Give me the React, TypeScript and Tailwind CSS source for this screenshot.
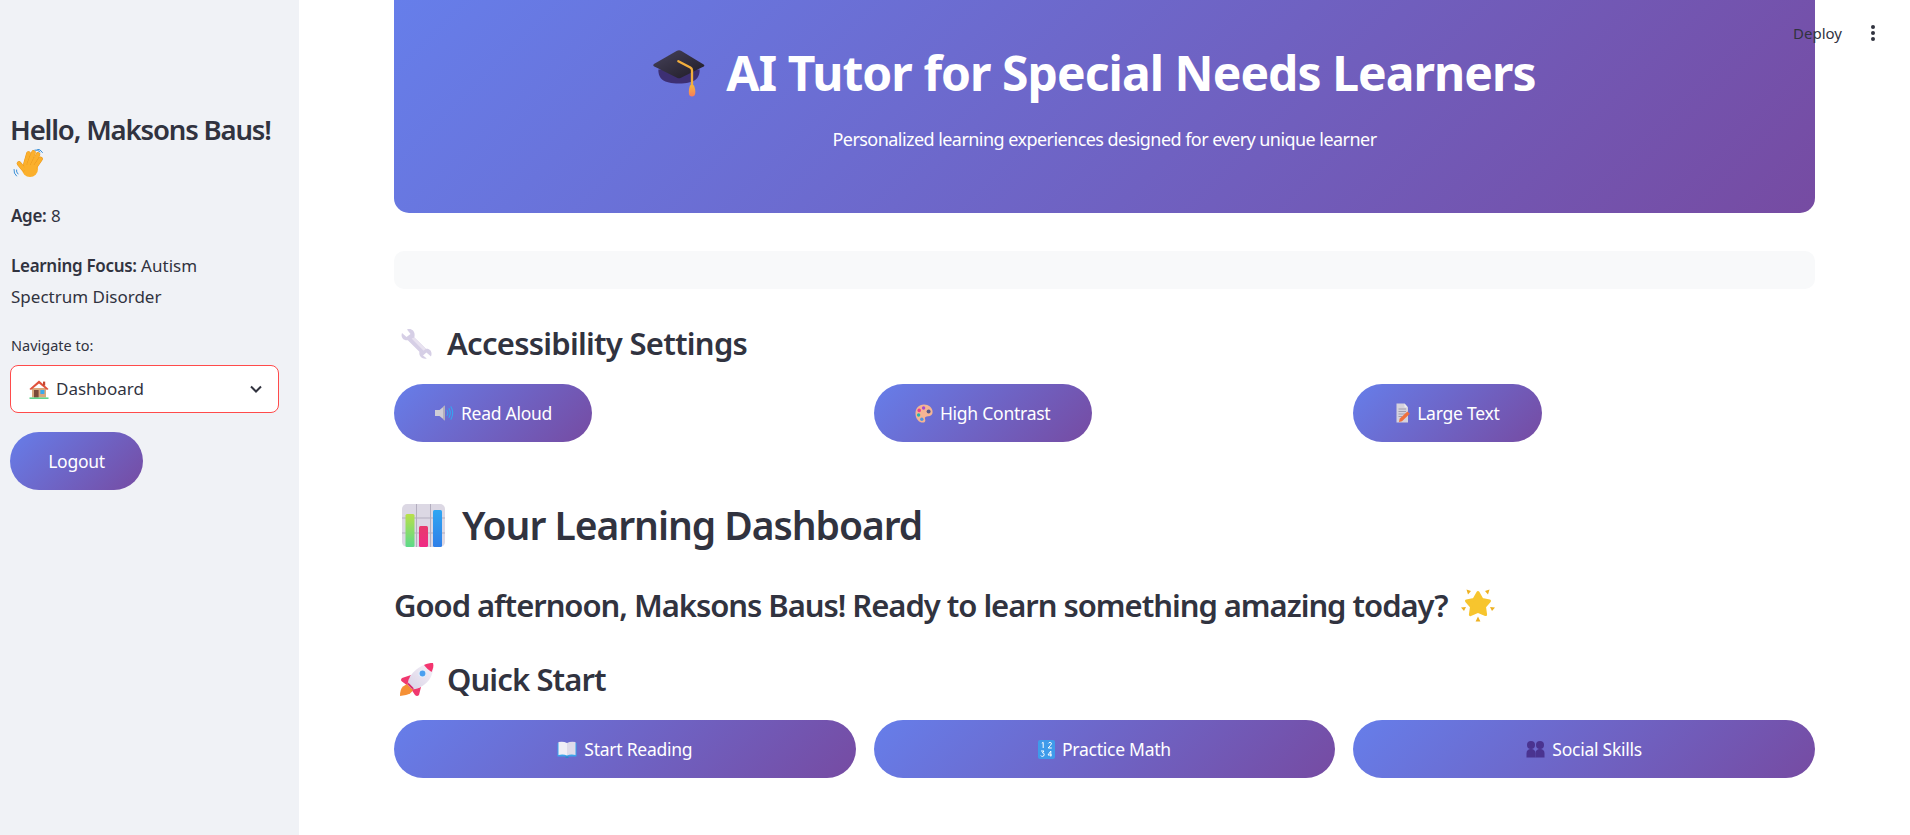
import React from "react";

const Cap = () => (
  <svg width="52" height="47" viewBox="0 0 156 140" className="shrink-0">
    <defs>
      <linearGradient id="capb" x1="0" y1="0" x2="1" y2="1"><stop offset="0" stopColor="#46425a" /><stop offset="1" stopColor="#1f1b26" /></linearGradient>
      <linearGradient id="tas" x1="0" y1="0" x2="0" y2="1"><stop offset="0" stopColor="#f6b73c" /><stop offset="1" stopColor="#f97c5a" /></linearGradient>
    </defs>
    <path d="M16 58 L140 58 C140 85 125 100 78 100 C30 100 16 85 16 58Z" fill="#3d2f73" />
    <path d="M1 44 Q0 47 4 49 L72 83 Q78 86 84 83 L152 49 Q156 46 152 43 L84 2 Q78 -1 72 2 L4 41Z" fill="url(#capb)" />
    <path d="M76 33 L112 52 Q117 55 117 60 L117 105" stroke="#f2ae3d" strokeWidth="7" fill="none" strokeLinecap="round" />
    <path d="M111 105 L123 105 Q130 125 125 135 Q117 143 109 135 Q105 125 111 105Z" fill="url(#tas)" />
  </svg>
);

const Wave = () => {
  const lines = ["M12.5 15 L15.5 4.5", "M16 15 L20.5 3.5", "M19.5 16 L25 5.5", "M22 18 L27.5 10", "M10.5 20 L6 14.5"];
  return (
    <svg width="30" height="30" viewBox="0 0 30 30" className="shrink-0">
      <circle cx="17" cy="20" r="8" fill="#fbb02c" />
      {lines.map((d) => (
        <g key={d} fill="none" strokeLinecap="round">
          <path d={d} stroke="#e8951a" strokeWidth="4.6" />
          <path d={d} stroke="#fbb02c" strokeWidth="3.8" />
        </g>
      ))}
      <path d="M11 16 L23 16 L24 22 L12 24Z" fill="#fbb02c" />
      <path d="M3.5 21 Q3 23 5 25 M1 20.5 Q0.5 24.5 3.5 27 M22 1 Q25 0.5 27 3 M24 0 Q27.5 0 29.5 3.5" stroke="#3a90d8" strokeWidth="1" fill="none" strokeLinecap="round" />
    </svg>
  );
};

const House = () => (
  <svg width="20" height="19" viewBox="0 0 20 19" className="shrink-0">
    <rect x="3" y="8" width="14" height="9.5" fill="#d9a77c" />
    <path d="M0.4 9 L10 0.6 L19.6 9 L18 10 L10 3.4 L2 10Z" fill="#e0523c" />
    <rect x="14" y="1.6" width="2.2" height="4" fill="#c5462f" />
    <rect x="5" y="10" width="4.6" height="7.6" fill="#7b4a3a" />
    <rect x="11.4" y="10" width="4" height="4" fill="#3ba9ec" />
    <rect x="0.5" y="17.4" width="19" height="1.6" fill="#60d48a" />
  </svg>
);

const SpeakerIcon = () => (
  <svg width="20" height="18" viewBox="0 0 20 18" className="shrink-0">
    <path d="M1 6 H5.5 L11 1.4 V16.6 L5.5 12 H1Z" fill="#cfcdd6" />
    <path d="M11 1.4 V16.6 L9 15 V3Z" fill="#b3b0bc" />
    <path d="M13 6.5 Q14.6 9 13 11.5 M15 4.6 Q17.6 9 15 13.4 M17 2.8 Q20.4 9 17 15.2" stroke="#36a3f0" strokeWidth="1.1" fill="none" strokeLinecap="round" />
  </svg>
);

const Palette = () => (
  <svg width="18" height="19" viewBox="0 0 18 19" className="shrink-0">
    <path d="M9 0.6 C3.8 0.6 0.5 4.5 0.5 9.4 C0.5 14.6 4 18.6 8 18.6 C10.6 18.6 10.6 16.4 10 15 C9.4 13 11 12.2 13 12.2 C16 12.2 17.6 10.6 17.6 8 C17.6 3.6 13.6 0.6 9 0.6Z" fill="#f4b594" />
    <circle cx="4.2" cy="6.4" r="1.8" fill="#ec3f8c" />
    <circle cx="8.6" cy="4" r="1.7" fill="#a34bd1" />
    <circle cx="13.6" cy="7.6" r="2" fill="#54588f" />
    <circle cx="3.6" cy="11" r="1.7" fill="#27b4ac" />
    <circle cx="6.8" cy="15.2" r="1.7" fill="#4f95e0" />
  </svg>
);

const Doc = () => (
  <svg width="14" height="20" viewBox="0 0 14 20" className="shrink-0">
    <path d="M0.5 0.5 H8.5 L12 4.5 V19.5 H0.5Z" fill="#d5d2dc" />
    <path d="M8.5 0.5 L12 4.5 H8.5Z" fill="#ecebf0" />
    <path d="M2.5 6 H10 M2.5 8.5 H10 M2.5 11 H10 M2.5 13.5 H6" stroke="#a09cae" strokeWidth="1" />
    <path d="M3 19 L3.6 15.8 L11.4 8.6 L13.8 10.8 L6 18.2Z" fill="#f0703c" />
  </svg>
);

const Wrench = () => (
  <svg width="32" height="32" viewBox="0 0 32 32" className="shrink-0">
    <path d="M2 6 L6.5 10 L10.5 7 L7 2.4 C11 0.8 15 3.6 14.6 8.4 L14.4 10.4 L26 21.8 C30.6 21.2 32.6 25.8 31 29.4 L26.4 25.6 L23 28.6 L26.8 31.4 C22.6 32.6 18.6 29.4 19.4 24.8 L7.8 13.2 C3.6 14 0.4 10.6 2 6Z" fill="#d6cfe6" />
    <path d="M14.4 10.4 L26 21.8 L23.6 23.8 L11.6 11.6Z" fill="#e8e2f0" />
  </svg>
);

const Chart = () => (
  <svg width="43" height="43" viewBox="0 0 43 43" className="shrink-0">
    <defs>
      <linearGradient id="gbar" x1="0" y1="0" x2="0" y2="1"><stop offset="0" stopColor="#b8e04a" /><stop offset="1" stopColor="#5cd98a" /></linearGradient>
      <linearGradient id="pbar" x1="0" y1="0" x2="0" y2="1"><stop offset="0" stopColor="#e73a6c" /><stop offset="1" stopColor="#f02a86" /></linearGradient>
      <linearGradient id="bbar" x1="0" y1="0" x2="0" y2="1"><stop offset="0" stopColor="#2fa6f2" /><stop offset="1" stopColor="#2f7fe8" /></linearGradient>
    </defs>
    <rect x="0" y="0" width="43" height="43" rx="5" fill="#dcd8e4" />
    <path d="M14.5 0 V43 M28.5 0 V43 M0 14 H43 M0 29 H43" stroke="#b3aebf" strokeWidth="1" />
    <rect x="3.5" y="10" width="9" height="33" rx="1.5" fill="url(#gbar)" />
    <rect x="17" y="22" width="9" height="21" rx="1.5" fill="url(#pbar)" />
    <rect x="31" y="6" width="9" height="37" rx="1.5" fill="url(#bbar)" />
  </svg>
);

const Star = () => (
  <svg width="34" height="34" viewBox="0 0 34 34" className="shrink-0">
    <path d="M17 4.5 L21 11.5 L28.5 13 L23.5 18.8 L24.6 26.6 L17 23.4 L9.4 26.6 L10.5 18.8 L5.5 13 L13 11.5Z" fill="#f7c52e" stroke="#f7c52e" strokeWidth="3" strokeLinejoin="round" />
    <path d="M5.5 1.5 L10 3 L7 6.5Z M28.5 1.5 L24 3 L27 6.5Z M0 19.5 L5 19 L3 23Z M34 19.5 L29 19 L31 23Z M17 28.5 L19.4 33.5 H14.6Z" fill="#eeb121" />
  </svg>
);

const Rocket = () => (
  <svg width="34" height="34" viewBox="0 0 34 34" className="shrink-0">
    <defs>
      <linearGradient id="rb" x1="0" y1="1" x2="1" y2="0"><stop offset="0" stopColor="#d9d2e6" /><stop offset="1" stopColor="#f6f2f8" /></linearGradient>
    </defs>
    <path d="M11 13 L2 16 Q0 18 2 19.5 L8 24Z" fill="#f0386f" />
    <path d="M21 25 L19 33 Q17 35 15 33 L11 27Z" fill="#f0386f" />
    <path d="M7 22 L13 28 Q11 32 6 33 L0 34 Q0 27 3 24.5Z" fill="#f59035" />
    <path d="M33 1 C26 1 17 5 11 13 C8 18 7.5 21 8 23 L12 27 C17 28 24 24 29 18 C33 12 34 6 33 1Z" fill="url(#rb)" />
    <path d="M33 1 C30 1 27 1.5 24 3 C26 6 29 8 31.5 10 C33 7 34 4 33 1Z" fill="#f4356f" />
    <path d="M8 23 L12 27 L14 26.4 L8.2 20.6Z" fill="#d62a6a" />
    <circle cx="22.5" cy="11.5" r="3.6" fill="#4aa0f0" stroke="#e4ecf8" strokeWidth="1.4" />
  </svg>
);

const Book = () => (
  <svg width="20" height="17" viewBox="0 0 20 17" className="shrink-0">
    <path d="M0.5 2 H19.5 V15.5 H0.5Z" fill="#3ba3ea" />
    <path d="M1.5 1 Q6.5 0 10 2 V14.6 Q6.5 13 1.5 14Z" fill="#f0eef6" />
    <path d="M18.5 1 Q13.5 0 10 2 V14.6 Q13.5 13 18.5 14Z" fill="#dfdbea" />
    <path d="M8.5 17 H11.5 V15.5 H8.5Z" fill="#2b88cc" />
  </svg>
);

const Numbers = () => (
  <svg width="17" height="19" viewBox="0 0 17 19" className="shrink-0">
    <rect width="17" height="19" rx="2" fill="#3f9bea" />
    <path d="M3.8 3.2 L5.2 2.4 V8 M10.4 3.4 Q10.8 2.4 12.2 2.4 Q13.6 2.6 13.4 3.8 Q13 5 10.2 8 H13.8 M3 11 H6 L4.4 12.8 Q6.2 12.8 6.2 14.6 Q6 16.4 4.4 16.4 Q3.2 16.4 2.8 15.6 M12.8 16.6 V11 L10 15 H14" stroke="#fff" strokeWidth="1" fill="none" />
  </svg>
);

const Busts = () => (
  <svg width="19" height="18" viewBox="0 0 19 18" className="shrink-0">
    <g fill="#4a3390">
      <circle cx="5" cy="5" r="4" />
      <path d="M0.5 17.5 V13.5 Q0.5 9 5 9 Q9.5 9 9.5 13.5 V17.5Z" />
      <circle cx="14" cy="5" r="4" />
      <path d="M9.5 17.5 V13.5 Q9.5 9 14 9 Q18.5 9 18.5 13.5 V17.5Z" />
    </g>
  </svg>
);

const grad = "bg-[linear-gradient(135deg,#667eea_0%,#764ba2_100%)]";
const font = "font-['Noto_Sans',sans-serif]";

function Btn({ icon, label, className }: { icon?: React.ReactNode; label: string; className: string }) {
  return (
    <button className={`${grad} ${className} h-[58px] rounded-full flex items-center justify-center gap-[7px] text-white text-[17.5px] tracking-[-0.25px]`}>
      {icon}
      <span>{label}</span>
    </button>
  );
}

export default function App() {
  return (
    <div className={`${font} h-screen w-full flex overflow-hidden bg-white text-[#31333f] relative`}>
      <aside className="w-[299px] shrink-0 bg-[#f0f2f6] pl-[11px] pr-[20px] pt-[112px] flex flex-col">
        <h2 className="-ml-[1px] text-[27.5px] font-semibold leading-[36px] tracking-[-1.15px] whitespace-nowrap">Hello, Maksons Baus!</h2>
        <div className="mt-[1px] h-[30px] ml-[2px]"><Wave /></div>
        <p className="mt-[23px] text-[17px] leading-[28px]"><strong className="font-semibold tracking-[-0.3px]">Age:</strong> 8</p>
        <p className="mt-[20px] text-[17px] leading-[31px]"><strong className="font-semibold tracking-[-0.3px]">Learning Focus:</strong> Autism<br />Spectrum Disorder</p>
        <div className="mt-[21px] text-[14.5px] leading-[24px]">Navigate to:</div>
        <div className="-ml-[1px] mt-[8px] w-[269px] h-[48px] bg-white rounded-[8px] border border-[#ff4b4b] flex items-center pl-[18px] pr-[15px] gap-[7px] text-[17px]">
          <House />
          <span className="flex-1">Dashboard</span>
          <svg width="14" height="9" viewBox="0 0 14 9"><path d="M2 1.5 L7 6.5 L12 1.5" stroke="#31333f" strokeWidth="2" fill="none" /></svg>
        </div>
        <Btn label="Logout" className="-ml-[1px] mt-[19px] w-[133px]" />
      </aside>

      <main className="flex-1 min-w-0 px-[95px] flex flex-col">
        <header className={`${grad} h-[213px] rounded-b-[15px] flex flex-col items-center pt-[45px] text-white`}>
          <div className="flex items-center gap-[21px] pr-[20px]">
            <Cap />
            <h1 className="text-[48px] font-bold leading-[56px] tracking-[-0.95px]">AI Tutor for Special Needs Learners</h1>
          </div>
          <p className="mt-[24px] text-[18px] leading-[28px] tracking-[-0.55px]">Personalized learning experiences designed for every unique learner</p>
        </header>

        <div className="mt-[38px] h-[38px] rounded-[10px] bg-[#f8f9fa]" />

        <div className="mt-[32px] flex items-center gap-[15px] h-[44px]">
          <span className="ml-[6px]"><Wrench /></span>
          <h3 className="text-[31px] font-semibold leading-[44px] tracking-[-0.74px]">Accessibility Settings</h3>
        </div>
        <div className="mt-[19px] grid grid-cols-3 gap-[18px]">
          <div><Btn icon={<SpeakerIcon />} label="Read Aloud" className="w-[198px]" /></div>
          <div><Btn icon={<Palette />} label="High Contrast" className="w-[218px]" /></div>
          <div><Btn icon={<Doc />} label="Large Text" className="w-[189px]" /></div>
        </div>

        <div className="mt-[58px] flex items-center gap-[17px] h-[50px]">
          <span className="ml-[8px] flex"><Chart /></span>
          <h2 className="text-[39px] font-semibold leading-[50px] tracking-[-1.04px]">Your Learning Dashboard</h2>
        </div>

        <div className="mt-[35px] flex items-center gap-[14px] h-[40px]">
          <h3 className="text-[31px] font-semibold leading-[40px] tracking-[-1.04px]">Good afternoon, Maksons Baus! Ready to learn something amazing today?</h3>
          <Star />
        </div>

        <div className="mt-[32px] flex items-center gap-[13px] h-[44px]">
          <span className="ml-[6px] flex"><Rocket /></span>
          <h3 className="text-[31px] font-semibold leading-[44px] tracking-[-0.9px]">Quick Start</h3>
        </div>
        <div className="mt-[19px] grid grid-cols-3 gap-[18px]">
          <Btn icon={<Book />} label="Start Reading" className="w-full" />
          <Btn icon={<Numbers />} label="Practice Math" className="w-full" />
          <Btn icon={<Busts />} label="Social Skills" className="w-full" />
        </div>
      </main>

      <div className="absolute top-[21px] right-[68px] text-[15px] leading-[24px]">Deploy</div>
      <svg width="6" height="18" viewBox="0 0 6 18" className="absolute top-[24px] right-[34px]">
        <circle cx="3" cy="3" r="2" fill="#31333f" />
        <circle cx="3" cy="9" r="2" fill="#31333f" />
        <circle cx="3" cy="15" r="2" fill="#31333f" />
      </svg>
    </div>
  );
}
